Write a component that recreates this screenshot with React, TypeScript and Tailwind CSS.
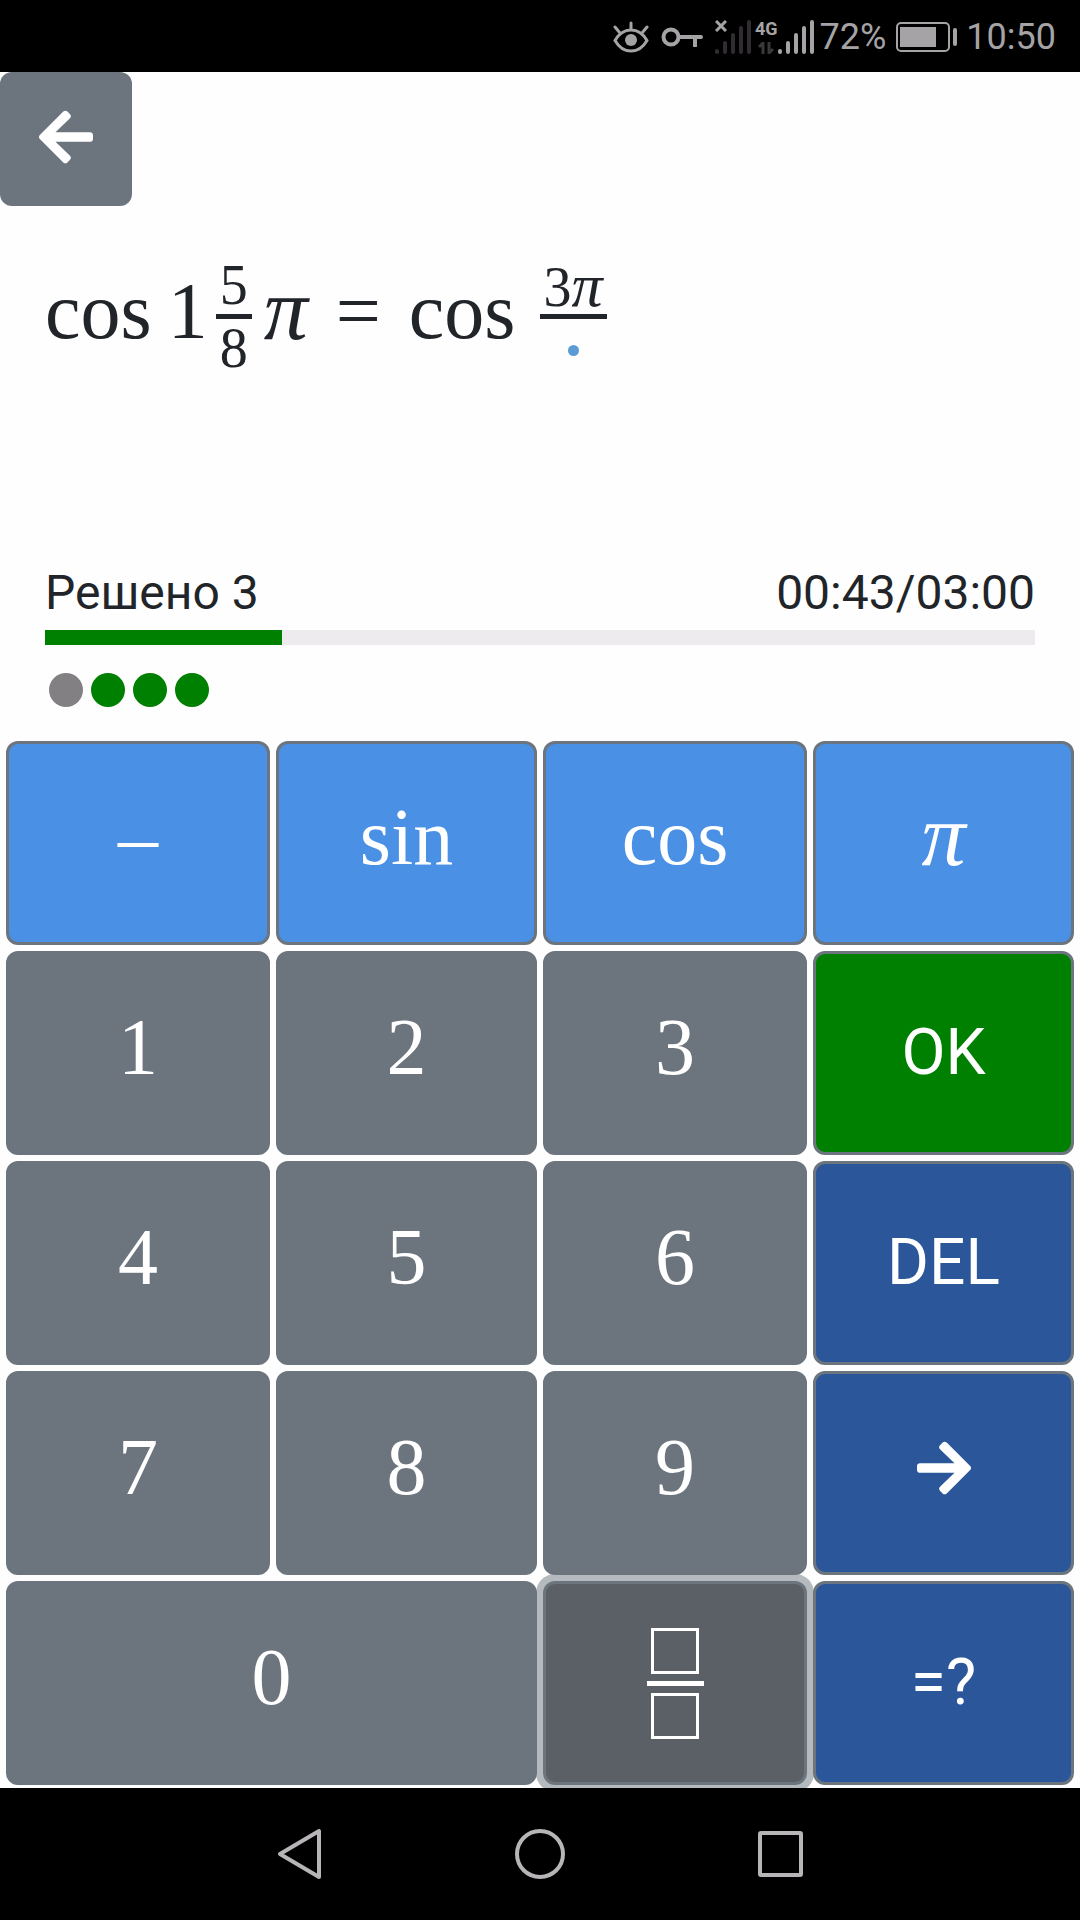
import type { ReactNode } from 'react';
import { FaArrowLeft, FaArrowRight } from 'react-icons/fa';

const ELAPSED_SECONDS = 43;
const TOTAL_SECONDS = 180;
const ANSWERS = ['current', 'solved', 'solved', 'solved'] as const;

const KEY_TONES = {
  digit: 'bg-[#6c757d]',
  math: 'bg-[#4a90e4]',
  ok: 'bg-[#008000]',
  control: 'bg-[#2b579a]',
  pressed: 'bg-[#5b6067] shadow-[0_0_0_7px_rgba(108,117,125,0.5)]',
};

function Key({ label, tone = 'digit', wide = false, children }: {
  label: string;
  tone?: keyof typeof KEY_TONES;
  wide?: boolean;
  children: ReactNode;
}) {
  return <button type="button" aria-label={label} className={`flex h-[204px] items-center justify-center rounded-xl border-3 border-[#6c757d] text-white ${KEY_TONES[tone]} ${wide ? 'col-span-2' : ''}`}>{children}</button>;
}

function MathText({ children }: { children: ReactNode }) {
  return <span className="block pb-3 font-['Liberation_Serif',serif] text-[80px] leading-[80px]">{children}</span>;
}

function Pi({ small = false }: { small?: boolean }) {
  return <i className={small ? 'text-[62px]' : 'text-[88px]'}>π</i>;
}

function Fraction({ top, bottom }: { top: ReactNode; bottom: ReactNode }) {
  return <span className="flex flex-col font-['Liberation_Serif',serif] text-[56px] leading-[50px]">
    <span className="flex h-[54px] items-baseline justify-center px-1">{top}</span>
    <span className="h-[5px] bg-[#212529]" />
    <span className="flex h-[54px] items-end justify-center px-1">{bottom}</span>
  </span>;
}

function SignalBars({ className }: { className: string }) {
  return <svg viewBox="0 0 36 34" className={`h-[34px] w-9 ${className}`} fill="none" stroke="currentColor" strokeWidth="4" strokeLinecap="round">
    <path d="M2 31v1M10 23v9M18 15v17M26 8v24M34 2v30" />
  </svg>;
}

function StatusBar() {
  return <header className="flex h-[72px] items-center justify-end bg-black pt-0.5 pr-6 text-[#a5a3a5]">
    <svg viewBox="0 0 36 32" className="mr-3 h-8 w-9" fill="none" stroke="currentColor" strokeWidth="3" strokeLinecap="round">
      <path d="M2 19.500C10 5.500 26 5.500 34 19.500C26 33.500 10 33.500 2 19.500Z" />
      <path d="M18 2v6M2 6l5 6M34 6l-5 6" />
      <circle cx="18" cy="19" r="6" fill="currentColor" stroke="none" />
    </svg>
    <svg viewBox="0 0 42 20" className="mr-3 h-5 w-[42px]" fill="none" stroke="currentColor" strokeWidth="4">
      <circle cx="10" cy="10" r="7.500" />
      <path d="M18 10h22M34 10v9" strokeLinecap="round" />
    </svg>
    <span className="relative mr-1">
      <SignalBars className="text-[#2f2d2f]" />
      <svg viewBox="0 0 12 12" className="absolute top-0 left-0 h-3 w-3" stroke="currentColor" strokeWidth="3"><path d="M1 1l10 10M11 1L1 11" /></svg>
    </span>
    <span className="flex h-[34px] flex-col items-center justify-between">
      <span className="font-['Roboto',sans-serif] text-[18px] leading-[18px] font-bold">4G</span>
      <svg viewBox="0 0 16 12" className="h-3 w-4 text-[#3a383a]" fill="none" stroke="currentColor" strokeWidth="3">
        <path d="M5 12V1L1 5M11 0v11l4-4" />
      </svg>
    </span>
    <SignalBars className="mr-1.5" />
    <span className="font-['Roboto',sans-serif] text-[36px] leading-[42px]">72%</span>
    <svg viewBox="0 0 62 30" className="mr-2 ml-[10px] h-[30px] w-[62px]" fill="none" stroke="currentColor">
      <rect x="1" y="1" width="52" height="28" rx="4" strokeWidth="2" />
      <rect x="4" y="5" width="36" height="20" fill="currentColor" stroke="none" />
      <path d="M59 8v14" strokeWidth="4" strokeLinecap="round" />
    </svg>
    <span className="font-['Roboto',sans-serif] text-[36px] leading-[42px]">10:50</span>
  </header>;
}

function Exercise() {
  return <section aria-label="Задание" className="flex flex-1 items-start px-[45px] pt-[54px] text-[#212529]">
    <div className="flex items-center">
      <MathText>cos</MathText>
      <span className="ml-4"><MathText>1</MathText></span>
      <span className="ml-2"><Fraction top="5" bottom="8" /></span>
      <span className="ml-3"><MathText><Pi /></MathText></span>
      <span className="mx-7"><MathText>=</MathText></span>
      <MathText>cos</MathText>
      <span className="ml-6">
        <Fraction top={<>3<Pi small /></>} bottom={<span className="mb-[17px] h-[11px] w-[11px] rounded-full bg-[#5b9bd5]" />} />
      </span>
    </div>
  </section>;
}

function Progress() {
  return <section className="px-[45px] font-['Roboto',sans-serif] text-[48px] leading-[56px] text-[#212529]">
    <div className="flex justify-between"><span>Решено 3</span><span>00:43/03:00</span></div>
    <div className="mt-[9px] h-[15px] bg-[#eeebee]">
      <div className="h-full bg-[#008000]" style={{ width: `${(ELAPSED_SECONDS / TOTAL_SECONDS) * 100}%` }} />
    </div>
    <div className="mt-7 mb-[34px] flex gap-2 pl-1">
      {ANSWERS.map((answer, index) => <span key={index} className={`h-[34px] w-[34px] rounded-full ${answer === 'solved' ? 'bg-[#008000]' : 'bg-[#838084]'}`} />)}
    </div>
  </section>;
}

function Keypad() {
  return <section aria-label="Клавиатура" className="grid grid-cols-[88fr_87fr_88fr_87fr] gap-1.5 px-1.5 pb-[3px] font-['Roboto',sans-serif] text-[64px]">
    <Key label="–" tone="math"><MathText>–</MathText></Key>
    <Key label="sin" tone="math"><MathText>sin</MathText></Key>
    <Key label="cos" tone="math"><MathText>cos</MathText></Key>
    <Key label="π" tone="math"><MathText><Pi /></MathText></Key>
    {['1', '2', '3'].map((digit) => <Key key={digit} label={digit}><MathText>{digit}</MathText></Key>)}
    <Key label="OK" tone="ok">OK</Key>
    {['4', '5', '6'].map((digit) => <Key key={digit} label={digit}><MathText>{digit}</MathText></Key>)}
    <Key label="DEL" tone="control">DEL</Key>
    {['7', '8', '9'].map((digit) => <Key key={digit} label={digit}><MathText>{digit}</MathText></Key>)}
    <Key label="Вправо" tone="control"><FaArrowRight className="mb-2.5 h-[62px] w-[54px]" /></Key>
    <Key label="0" wide><MathText>0</MathText></Key>
    <Key label="Дробь" tone="pressed">
      <span className="flex flex-col items-center gap-[7px]">
        <span className="h-[46px] w-12 border-3 border-white" />
        <span className="h-[5px] w-[57px] bg-white" />
        <span className="h-[46px] w-12 border-3 border-white" />
      </span>
    </Key>
    <Key label="=?" tone="control">=?</Key>
  </section>;
}

function NavBar() {
  return <nav className="flex h-[132px] items-center justify-center gap-[190px] bg-black text-[#b8b5b8]">
    <button type="button" aria-label="Назад">
      <svg viewBox="0 0 50 52" className="h-[52px] w-[50px]" fill="none" stroke="currentColor" strokeWidth="4" strokeLinejoin="round"><path d="M44 3v46L5 26z" /></svg>
    </button>
    <button type="button" aria-label="Домой">
      <svg viewBox="0 0 50 52" className="h-[52px] w-[50px]" fill="none" stroke="currentColor" strokeWidth="4"><circle cx="25" cy="26" r="23" /></svg>
    </button>
    <button type="button" aria-label="Недавние">
      <svg viewBox="0 0 50 52" className="h-[52px] w-[50px]" fill="none" stroke="currentColor" strokeWidth="4"><rect x="5" y="5" width="41" height="42" rx="1" /></svg>
    </button>
  </nav>;
}

export default function App() {
  return <div className="flex min-h-screen flex-col bg-[#fefefe]">
    <StatusBar />
    <main className="flex flex-1 flex-col">
      <button type="button" aria-label="Назад" className="flex h-[134px] w-[132px] items-center justify-center rounded-xl bg-[#6c757d] pb-1 text-white">
        <FaArrowLeft className="h-[62px] w-[54px]" />
      </button>
      <Exercise />
      <Progress />
      <Keypad />
    </main>
    <NavBar />
  </div>;
}
